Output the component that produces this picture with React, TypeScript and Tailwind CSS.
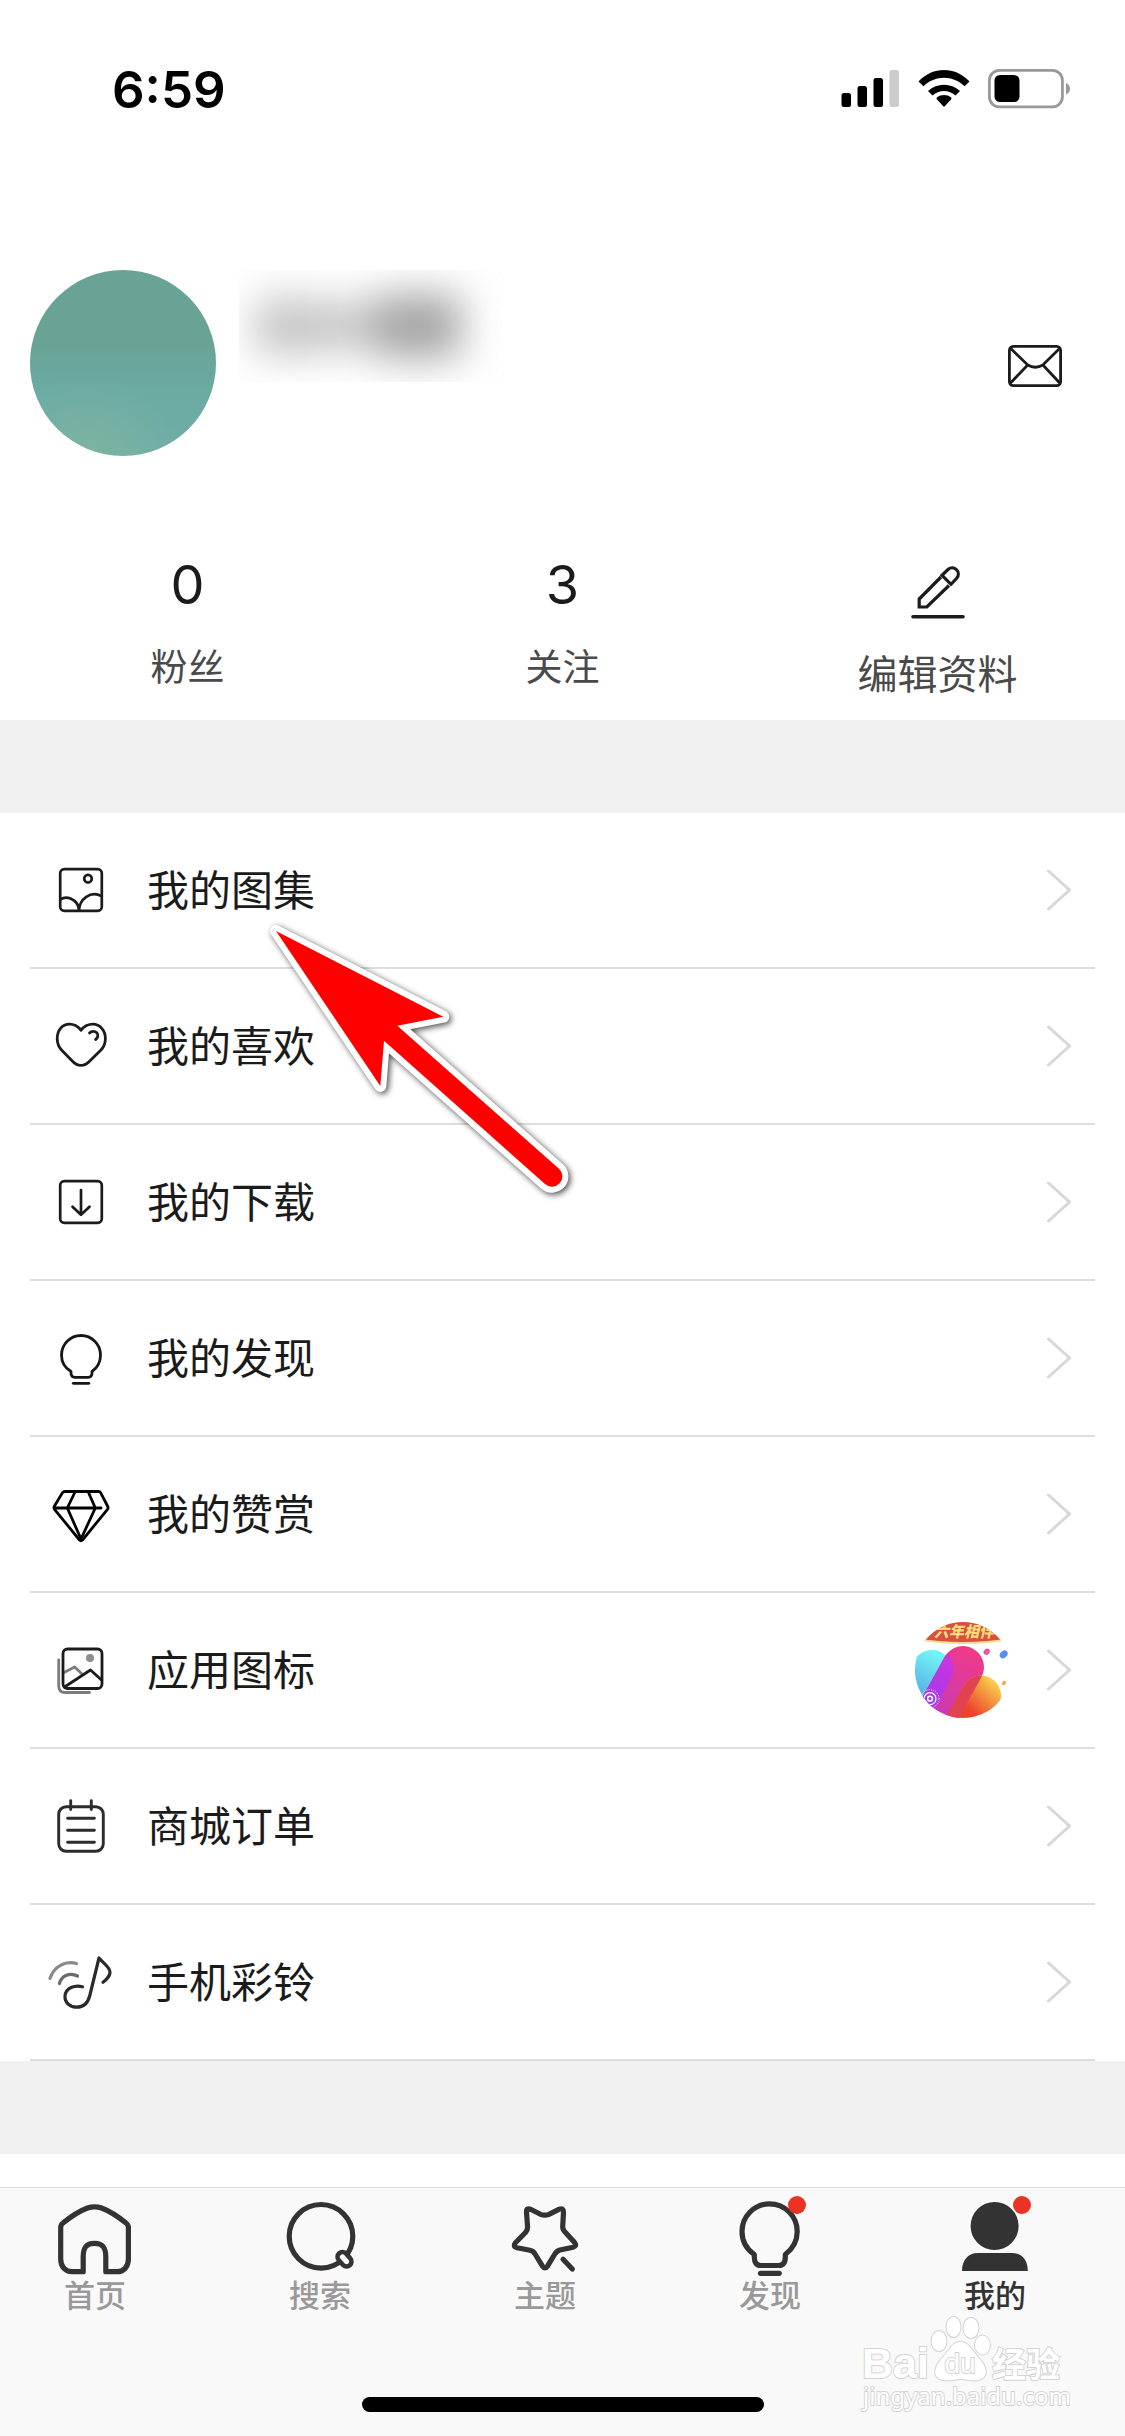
// src/App.tsx
import type { ReactNode } from "react";

const stats = [
  { label: "粉丝", value: "0" },
  { label: "关注", value: "3" },
];

const iconBox = "h-[60px] w-[60px] shrink-0 overflow-visible";

function AlbumIcon() {
  return (
    <svg viewBox="0 0 60 60" className={iconBox} fill="none" stroke="#1b1b1b" strokeWidth="2.7">
      <rect x="9.2" y="9.2" width="41.6" height="41.6" rx="4" />
      <circle cx="37" cy="18.7" r="3.8" />
      <path d="M9.5 39.5C12 37.6 16 37 19.5 38.6C25 41 28 45 28 51C28 39 40 30 50.5 36.2" />
    </svg>
  );
}

function HeartIcon() {
  return (
    <svg viewBox="0 0 60 60" className={iconBox} fill="none" stroke="#1b1b1b" strokeWidth="2.8" strokeLinecap="round">
      <path d="M30 14C26.5 10 23 8.2 18.5 8.2C11 8.2 6.2 14.5 6.2 22.5C6.2 27.5 7.6 31 11 34.5L21.5 45.3C26.5 50.8 33.5 50.8 38.5 45.3L49.5 34.5C53 31 54.4 27.5 54.4 22.5C54.4 14.5 49 8.2 41.8 8.2C37.5 8.2 33.5 10 30 14Z" />
      <path d="M38.5 17C40.5 14.8 44 14.8 46 17C47.6 19 46.9 21.8 44.6 23.5" />
    </svg>
  );
}

function DownloadIcon() {
  return (
    <svg viewBox="0 0 60 60" className={iconBox} fill="none" stroke="#1b1b1b" strokeWidth="2.7" strokeLinecap="round" strokeLinejoin="round">
      <rect x="9.2" y="9.2" width="41.6" height="41.6" rx="4" />
      <path d="M30 18V42.5M21.5 34.7L30 42.8L38.5 34.7" />
    </svg>
  );
}

function BulbIcon() {
  return (
    <svg viewBox="0 0 60 60" className={iconBox} fill="none" stroke="#161616" strokeWidth="2.8" strokeLinecap="round" strokeLinejoin="round">
      <path d="M20 43.5C14 40 10.5 34 10.5 27A19.5 19.5 0 0 1 49.5 27C49.5 34 46 40 41 43.5V45C41 48 39.5 49.3 37 49.3H24C21.3 49.3 20 48 20 45Z" />
      <path d="M22.3 55.3H37.8" />
    </svg>
  );
}

function DiamondIcon() {
  return (
    <svg viewBox="0 0 60 60" className={iconBox} fill="none" stroke="#000" strokeWidth="2.8" strokeLinecap="round" strokeLinejoin="round">
      <path d="M14 7.5H47.5Q49 7.5 49.6 8.6L56.8 22.5Q57.4 24 56.5 25.3L31.5 56Q30 57.4 28.5 56L3.5 25.3Q2.6 24 3.2 22.5L11.5 8.6Q12.4 7.5 14 7.5Z" />
      <path d="M3.5 24H50M24 8L16.3 24L30 55L44.3 24L37.3 8" />
    </svg>
  );
}

function AppIcon() {
  return (
    <svg viewBox="0 0 60 60" className={iconBox} fill="none" strokeWidth="2.8" strokeLinecap="round" strokeLinejoin="round">
      <path d="M7.7 20V46Q7.7 52.5 14 52.5H38.5M13 32.5L23.7 27L31 34" stroke="#7c7c7c" />
      <circle cx="39" cy="18" r="4" fill="#8d8d8d" />
      <rect x="12" y="9" width="39" height="39.5" rx="4.5" stroke="#1b1b1b" />
      <path d="M13.5 47L39.5 30L50.5 40" stroke="#1b1b1b" />
    </svg>
  );
}

function OrderIcon() {
  return (
    <svg viewBox="0 0 60 60" className={iconBox} fill="none" stroke="#2c2c2c" strokeWidth="2.9" strokeLinecap="round">
      <rect x="7.7" y="10.7" width="44.6" height="44.6" rx="7.5" />
      <path d="M19.7 4.6V13.5M40.3 4.6V13.5M16.6 22.3H43.4M16.6 34.3H43.4M16.6 46.3H43.4" />
    </svg>
  );
}

function RingtoneIcon() {
  return (
    <svg viewBox="0 0 60 60" className={iconBox} fill="none" strokeWidth="3.2" strokeLinecap="round" strokeLinejoin="round">
      <path d="M-1 26.5C3 14.5 14 8.5 25.5 11.5" stroke="#8a8a8a" />
      <path d="M8.4 31.5C10.5 23.5 19 20 26.5 24" stroke="#6a6a6a" />
      <path d="M31.5 34.8C24 32.5 14.5 36 14 44C13.6 51 19.5 55.2 25.8 55.2C33 55.2 37 50.5 38.8 43.5L48 6C53 12 59.3 15.5 59 20.5C58.6 25 55 28 52 30.2" stroke="#2a2a2a" />
    </svg>
  );
}

// Current launcher icon, shown beside the 应用图标 row
function LauncherBadge() {
  return (
    <svg viewBox="0 0 96 96" className="h-24 w-24 shrink-0">
      <defs>
        <clipPath id="disc">
          <circle cx="48" cy="48" r="48" />
        </clipPath>
        <clipPath id="pill">
          <path d="M29.9 34.4A21 21 0 0 1 66.7 54.6L28.1 124.6L-8.7 104.4Z" />
        </clipPath>
        <linearGradient id="cyan" x1="0.7" y1="0" x2="0.4" y2="0.7">
          <stop offset="0" stopColor="#6ff5f8" />
          <stop offset="1" stopColor="#4a7fd6" />
        </linearGradient>
        <linearGradient id="pink" x1="0.8" y1="0" x2="0.3" y2="1">
          <stop offset="0" stopColor="#ef3b87" />
          <stop offset="1" stopColor="#bb38c8" />
        </linearGradient>
        <linearGradient id="violet" x1="0.8" y1="0" x2="0.4" y2="0.7">
          <stop offset="0" stopColor="#cd35dd" />
          <stop offset="1" stopColor="#8d3bf2" />
        </linearGradient>
        <linearGradient id="amber" x1="0.8" y1="0" x2="0.5" y2="0.4">
          <stop offset="0" stopColor="#f9cf4b" />
          <stop offset="1" stopColor="#ec442c" />
        </linearGradient>
      </defs>
      <g clipPath="url(#disc)">
        <path d="M-0.5 38.3A20 20 0 0 1 34.5 57.7L-4.1 127.7L-39.1 108.3Z" fill="url(#cyan)" />
        <path d="M29.9 34.4A21 21 0 0 1 66.7 54.6L28.1 124.6L-8.7 104.4Z" fill="url(#pink)" />
        <path d="M48.5 63.8A20 20 0 0 1 83.5 83.2L55 135L20 115Z" fill="url(#amber)" />
        <g clipPath="url(#pill)">
          <path d="M-0.5 38.3A20 20 0 0 1 37 54L30 68L-4.1 127.7L-39.1 108.3Z" fill="url(#violet)" />
          <path d="M48.5 63.8A20 20 0 0 1 83.5 83.2L55 135L20 115Z" fill="#e2424f" />
        </g>
        <path d="M0 -4H96V18Q48 26 0 18Z" fill="#f7dc8c" />
        <path d="M0 -4H96V16Q48 24 0 16Z" fill="#d94f40" />
        <text x="49" y="15" textAnchor="middle" fontSize="15" fontWeight="900" fontStyle="italic" fill="#fbdc7c" fontFamily="'Noto Sans CJK SC', sans-serif">
          六年相伴
        </text>
        <g fill="none" stroke="#fff">
          <circle cx="15" cy="76.7" r="2.4" strokeWidth="1.5" />
          <circle cx="15" cy="76.7" r="6" strokeWidth="1.2" />
          <circle cx="15" cy="76.7" r="9" strokeWidth="1" strokeDasharray="1 1.4" />
        </g>
      </g>
      <ellipse cx="71.7" cy="29.7" rx="3.4" ry="2.8" fill="#e8559f" transform="rotate(-45 71.7 29.7)" />
      <ellipse cx="88.7" cy="32.3" rx="4.4" ry="3.4" fill="#5390f0" transform="rotate(-45 88.7 32.3)" />
      <ellipse cx="89" cy="61" rx="2.3" ry="1.8" fill="#f0a840" transform="rotate(-45 89 61)" />
    </svg>
  );
}

const menu: { label: string; icon: ReactNode; extra?: ReactNode }[] = [
  { label: "我的图集", icon: <AlbumIcon /> },
  { label: "我的喜欢", icon: <HeartIcon /> },
  { label: "我的下载", icon: <DownloadIcon /> },
  { label: "我的发现", icon: <BulbIcon /> },
  { label: "我的赞赏", icon: <DiamondIcon /> },
  { label: "应用图标", icon: <AppIcon />, extra: <LauncherBadge /> },
  { label: "商城订单", icon: <OrderIcon /> },
  { label: "手机彩铃", icon: <RingtoneIcon /> },
];

const tabs: { label: string; icon: ReactNode; dot?: boolean; active?: boolean }[] = [
  {
    label: "首页",
    icon: (
      <path d="M26.2 71.7H15C8.5 71.7 3.7 67 3.7 59V27.5C3.7 25.6 4.4 24.2 6 23C14 16.5 23 10.8 30.5 8Q37.5 5.6 44.5 8C52 10.8 61 16.5 69 23C70.6 24.2 71.4 25.6 71.4 27.5V59C71.4 67 66.5 71.7 60 71.7H48.8V57C48.8 48 46 43.3 37.5 43.3C29 43.3 26.2 48 26.2 57Z" />
    ),
  },
  {
    label: "搜索",
    icon: (
      <>
        <circle cx="39" cy="36.3" r="31.8" />
        <path d="M60.5 57L64.5 61.5" strokeWidth="14.5" />
        <path d="M60.5 57L64.5 61.5" stroke="#fff" />
      </>
    ),
  },
  {
    label: "主题",
    icon: (
      <path d="M24 9.5Q19.3 7.5 19.5 12L20.6 27Q20.6 30 18.5 32.5L8.2 43Q5.5 46.6 10 47.7L23 50.2Q26.5 51 28 54L35.5 66.2Q38 69.6 40.5 66.2L47.5 54.5Q49.5 51 53 50L66 47.3Q70.3 46 67.6 42.5L58 32Q55.5 29.5 55.7 26.5L56.5 12Q56.5 7.5 52.3 9.2L42 14.3Q37.8 16 33.5 14.3ZM56 59.3L65.3 69" />
    ),
  },
  {
    label: "发现",
    icon: (
      <>
        <path d="M22.3 54.5C14.5 49 10 40.5 10 31.5A27.6 27.6 0 0 1 65.2 31.5C65.2 40.5 60.5 49 53.3 54.5V57C53.3 62.5 51 65.5 46.5 65.5H29C24.5 65.5 22.3 62.5 22.3 57Z" />
        <path d="M28.5 73.3H47.2" />
      </>
    ),
    dot: true,
  },
  {
    label: "我的",
    icon: (
      <g fill="#333" stroke="none">
        <circle cx="37.6" cy="26" r="24" />
        <path d="M5 71C5 60 11 53 21 53H55C65 53 70.8 60 70.8 71Z" />
      </g>
    ),
    dot: true,
    active: true,
  },
];

function StatusBar() {
  return (
    <header className="flex h-[178px] items-center justify-between pr-[54px] pl-28">
      <time className="font-[Inter] text-[51px] leading-none font-semibold text-black">6:59</time>
      <svg viewBox="0 0 230 40" className="h-10 w-[230px]">
        <rect x="0.5" y="24" width="9.5" height="14" rx="2.5" />
        <rect x="16.5" y="17" width="9.5" height="21" rx="2.5" />
        <rect x="32.5" y="9" width="9.5" height="29" rx="2.5" />
        <rect x="48.5" y="1" width="9.5" height="37" rx="2.5" fill="#ccc" />
        <path d="M103 38L96 30.5C95.3 29.7 95.4 28.8 96.2 28.2C100 25.4 106 25.4 109.8 28.2C110.6 28.8 110.7 29.7 110 30.5Z" />
        <path d="M87 22C96 13.5 110 13.5 119 22L114.5 26.5C108 20.5 98 20.5 91.5 26.5Z" />
        <path d="M77.5 12.5C92 -2.7 114 -2.7 128.5 12.5L123.5 17.3C112 5.8 94 5.8 82.5 17.3Z" />
        <rect x="148.4" y="1.4" width="73" height="36.5" rx="10" fill="none" stroke="#999" strokeWidth="2.8" />
        <rect x="153.5" y="6" width="25" height="27" rx="5.5" />
        <path d="M225 14Q229 16 229 19.7T225 25.5Z" fill="#999" />
      </svg>
    </header>
  );
}

function Profile() {
  return (
    <section className="pt-[92px] pb-6">
      <div className="flex items-start">
        <div className="ml-[30px] h-[186px] w-[186px] shrink-0 rounded-full bg-[radial-gradient(circle_at_30%_105%,#7eb4a0,transparent_40%),linear-gradient(#69a396_40%,#6aaba2_65%,#70aea8_100%)]" />
        <div className="ml-[23px] h-28 w-[266px] overflow-hidden" aria-hidden="true">
          <div className="flex h-full items-center pl-4 blur-[20px]">
            <div className="h-14 w-[62px] bg-[#c4c4c4]" />
            <div className="h-12 w-[58px] bg-[#c6c6c6]" />
            <div className="h-16 w-[86px] bg-[#a4a4a4]" />
          </div>
        </div>
        <button type="button" aria-label="消息" className="mt-[75px] mr-[63px] ml-auto">
          <svg viewBox="0 0 54 42" className="h-[42px] w-[54px]" fill="none" stroke="#1b1b1b" strokeWidth="2.8">
            <rect x="1.4" y="1.4" width="51.2" height="39.2" rx="4" />
            <path d="M2.5 3.3L19.7 20Q27.2 24.5 34.9 20L51.8 3.3M2.5 38L19.7 20M34.9 20L51.8 38" />
          </svg>
        </button>
      </div>

      <div className="mt-[97px] grid grid-cols-3">
        {stats.map((stat) => (
          <div key={stat.label} className="flex flex-col items-center">
            <span className="font-[Inter] text-[54px] leading-[64px] text-[#1b1b1b]">{stat.value}</span>
            <span className="mt-6 text-[37px] leading-[48px] text-[#4a4a4a]">{stat.label}</span>
          </div>
        ))}
        <button type="button" className="flex flex-col items-center pt-3">
          <svg viewBox="0 0 54 54" className="h-[54px] w-[54px]" fill="none" stroke="#1b1b1b" strokeWidth="3.2">
            <path d="M30 12L8.2 34V42H15.8L38 20.5" />
            <path d="M31 10.3L40 19.3L45.5 13.5C51 7.5 43 -0.8 37 4.5Z" />
            <path d="M2 51.7H52" strokeWidth="3.6" strokeLinecap="round" />
          </svg>
          <span className="mt-[29px] text-[40px] leading-[48px] text-[#4a4a4a]">编辑资料</span>
        </button>
      </div>
    </section>
  );
}

function Pointer() {
  return (
    <svg
      viewBox="0 0 1050 960"
      className="pointer-events-none absolute top-[87px] left-[250px] h-80 w-[350px] overflow-visible drop-shadow-[2px_2px_3px_rgba(0,0,0,0.7)]"
    >
      <path
        d="M78 93L580 350L442 377L927 806A31 31 0 0 1 885 852L402 422L391 558Z"
        fill="red"
        stroke="#fff"
        strokeWidth="36"
        strokeLinejoin="round"
        paintOrder="stroke"
      />
    </svg>
  );
}

function Watermark() {
  return (
    <svg
      viewBox="0 0 215 106"
      className="pointer-events-none absolute right-[55px] bottom-5 h-[106px] w-[215px]"
      fill="#fff"
      stroke="#d4d4d4"
      strokeWidth="2"
      paintOrder="stroke"
    >
      <text x="7" y="68" fontSize="43" fontWeight="700" fontFamily="'Liberation Sans', sans-serif">Bai</text>
      <ellipse cx="84" cy="31" rx="7.5" ry="10" />
      <ellipse cx="98.5" cy="17" rx="7" ry="10" />
      <ellipse cx="116" cy="18" rx="7.5" ry="10" />
      <ellipse cx="127.5" cy="35" rx="7.5" ry="9.5" />
      <path d="M105.5 32C113 32 117 40 122 46C133 57 134 68 123 70C116 71.5 112 69 105.5 69C99 69 95 71.5 88 70C77 68 78 57 89 46C94 40 98 32 105.5 32Z" />
      <text x="105" y="63" textAnchor="middle" fontSize="28" fontFamily="'Liberation Sans', sans-serif">du</text>
      <text x="137" y="67" fontSize="34" fontWeight="700" fontFamily="'Noto Sans CJK SC', sans-serif">经验</text>
      <text x="8" y="95" fontSize="24" fontFamily="'Noto Sans', sans-serif">jingyan.baidu.com</text>
    </svg>
  );
}

export default function App() {
  return (
    <div className="flex min-h-screen flex-col bg-white font-['Noto_Sans_CJK_SC',sans-serif]">
      <StatusBar />
      <Profile />
      <div className="h-[93px] bg-[#f1f1f1]" />

      <nav className="relative">
        <ul>
          {menu.map((item) => (
            <li key={item.label}>
              <a
                href="#"
                className="mx-[30px] flex h-[156px] items-center border-b-2 border-[#dedede] pr-6 pl-[21px] text-[#1b1b1b]"
              >
                {item.icon}
                <span className="ml-9 flex-1 pb-1 text-[42px] leading-[60px]">{item.label}</span>
                {item.extra}
                <svg
                  viewBox="0 0 24 42"
                  className="ml-9 h-[42px] w-6 shrink-0"
                  fill="none"
                  stroke="#d8d8d8"
                  strokeWidth="3"
                  strokeLinecap="round"
                >
                  <path d="M1.5 2L22.5 21L1.5 40" />
                </svg>
              </a>
            </li>
          ))}
        </ul>
        <Pointer />
      </nav>

      <div className="h-[93px] bg-[#f1f1f1]" />

      <footer className="relative mt-auto h-[249px] border-t border-[#d9d9d9] bg-[#f9f9f9] pt-3">
        <nav className="grid grid-cols-5">
          {tabs.map((tab) => (
            <a key={tab.label} href="#" className="flex flex-col items-center pr-[35px]">
              <span className="relative">
                <svg
                  viewBox="0 0 76 76"
                  className="h-[76px] w-[76px]"
                  fill="none"
                  stroke="#333"
                  strokeWidth="5.2"
                  strokeLinecap="round"
                  strokeLinejoin="round"
                >
                  {tab.icon}
                </svg>
                {tab.dot && <span className="absolute -top-1 right-0.5 h-[18px] w-[18px] rounded-full bg-[#eb3323]" />}
              </span>
              <span
                className={
                  tab.active
                    ? "text-[31px] leading-9 font-medium text-[#333]"
                    : "text-[31px] leading-9 font-medium text-[#999]"
                }
              >
                {tab.label}
              </span>
            </a>
          ))}
        </nav>
        <Watermark />
        <div className="absolute bottom-6 left-1/2 h-[15px] w-[402px] -translate-x-1/2 rounded-full bg-black" />
      </footer>
    </div>
  );
}
